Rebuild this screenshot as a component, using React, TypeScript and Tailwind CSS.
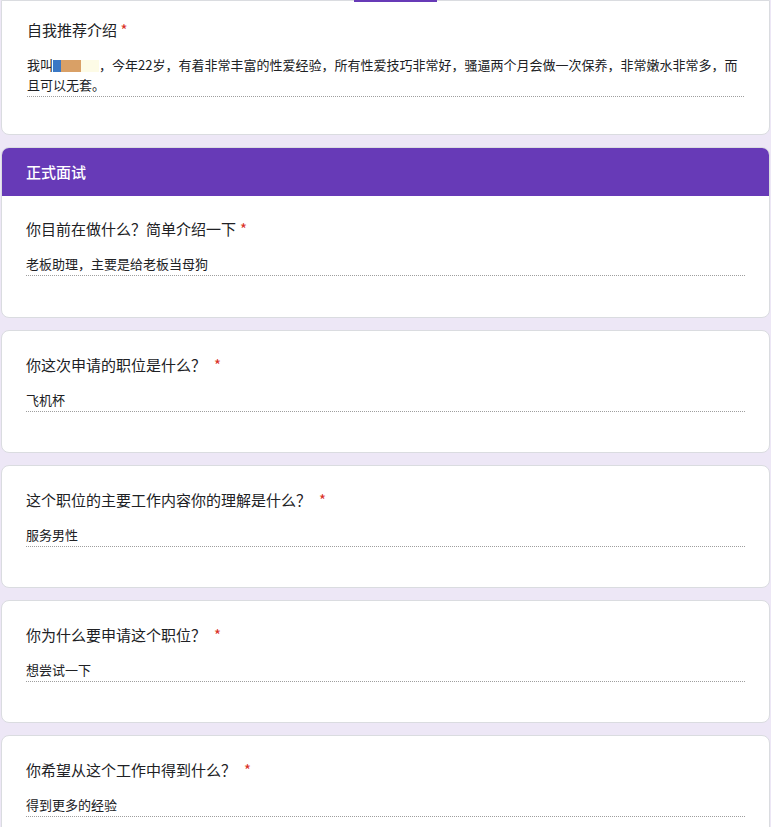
const font = { fontFamily: '"Noto Sans CJK SC", Roboto, sans-serif' };

const qa = [
  { q: '你目前在做什么？简单介绍一下', a: '老板助理，主要是给老板当母狗', gap: false },
  { q: '你这次申请的职位是什么？', a: '飞机杯', gap: true },
  { q: '这个职位的主要工作内容你的理解是什么？', a: '服务男性', gap: true },
  { q: '你为什么要申请这个职位？', a: '想尝试一下', gap: true },
  { q: '你希望从这个工作中得到什么？', a: '得到更多的经验', gap: true },
];

function Answer({ children }: { children: React.ReactNode }) {
  return (
    <div className="border-b border-dotted border-[#9e9e9e] pb-[1px] text-[13px] leading-[20px] text-[#202124]">
      {children}
    </div>
  );
}

export default function App() {
  return (
    <div className="h-[827px] overflow-hidden bg-[#ede7f6]" style={font}>
      <div className="relative mx-[1px] h-[135px] rounded-b-lg border border-[#dadce0] bg-white px-[25px] pt-[18px]">
        <div className="absolute left-[352px] top-[-1px] h-[2px] w-[83px] bg-[#673ab7]" />
        <div className="text-[15px] leading-[22px] text-[#202124]">
          自我推荐介绍 <span className="text-[#d93025]">*</span>
        </div>
        <div className="mt-[14px]">
          <Answer>
            我叫
            <span className="inline-block h-[12px] w-[8px] bg-[#3b78c4] align-middle" />
            <span className="inline-block h-[12px] w-[20px] bg-[#d9a066] align-middle" />
            <span className="inline-block h-[12px] w-[18px] bg-[#fdfbe6] align-middle" />
            ，今年22岁，有着非常丰富的性爱经验，所有性爱技巧非常好，骚逼两个月会做一次保养，非常嫩水非常多，而且可以无套。
          </Answer>
        </div>
      </div>
      <div className="mt-[12px]">
        {qa.map((item, i) => (
          <div
            key={i}
            className={`mx-[1px] overflow-hidden rounded-lg border border-[#dadce0] bg-white ${i > 0 ? 'mt-[12px]' : ''}`}
          >
            {i === 0 && (
              <div className="flex h-[48px] items-center bg-[#673ab7] px-[24px] text-[15px] font-medium text-white">
                正式面试
              </div>
            )}
            <div className={`h-[121px] px-[24px] ${item.gap ? 'pt-[23px]' : 'pt-[22px]'}`}>
              <div className="text-[15px] leading-[22px] text-[#202124]">
                {item.q}
                <span className={`${item.gap ? 'ml-[8px]' : 'ml-[4px]'} text-[#d93025]`}>*</span>
              </div>
              <div className="mt-[14px]">
                <Answer>{item.a}</Answer>
              </div>
            </div>
          </div>
        ))}
      </div>
    </div>
  );
}
